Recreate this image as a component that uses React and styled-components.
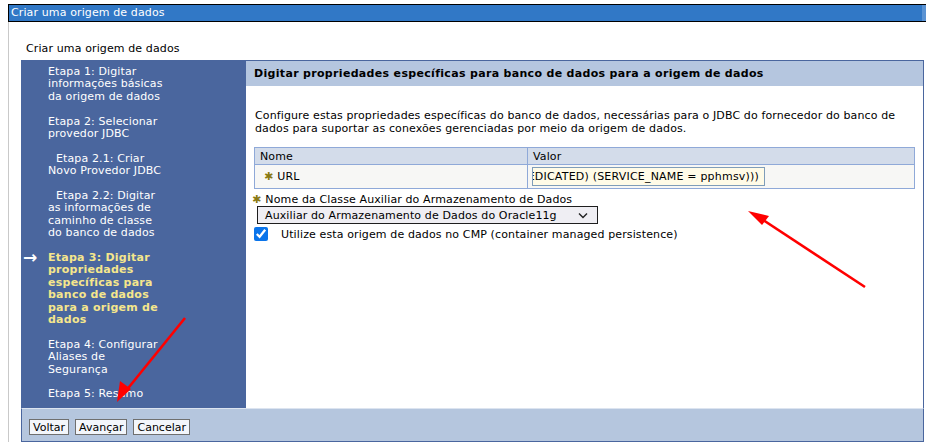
import React from 'react'
import styled, { createGlobalStyle } from 'styled-components'

const GlobalStyle = createGlobalStyle`
  html, body {
    margin: 0;
    padding: 0;
    background: #ffffff;
  }
  body {
    font-family: "DejaVu Sans", Verdana, sans-serif;
    font-size: 11px;
    letter-spacing: 0.12px;
    color: #000000;
  }
`

const Page = styled.div`
  position: relative;
  width: 926px;
  height: 442px;
  overflow: hidden;
  padding-top: 4px;
  box-sizing: border-box;
`

const Frame = styled.div`
  margin-left: 8px;
  border-left: 1px solid #c9c9c9;
  height: 438px;
  box-sizing: border-box;
`

const TitleBar = styled.div`
  height: 16px;
  line-height: 16px;
  margin-left: -1px;
  border-top: 1px solid #000;
  border-bottom: 1px solid #000;
  border-left: 1px solid #000;
  background: linear-gradient(to right, #3178c6 0, #3178c6 913px, #5b93d3 913px);
  color: #fff;
  padding-left: 2px;
  white-space: nowrap;
`

const Body = styled.div`
  padding: 20px 0 0 12px;
`

const Subtitle = styled.div`
  padding-left: 5px;
  height: 13px;
  line-height: 13px;
  margin-bottom: 5px;
`

const Wizard = styled.div`
  display: grid;
  grid-template-columns: 225px 678px;
  grid-template-rows: 348px 34px;
`

const Nav = styled.div`
  background: #4a669e;
  padding: 6px 0 0 0;
`

const NavItem = styled.div`
  position: relative;
  padding-left: 27px;
  line-height: 12.4px;
  margin-bottom: 12.4px;
  color: ${p => (p.current ? '#f5e68c' : '#ffffff')};
  font-weight: ${p => (p.current ? 'bold' : 'normal')};
  letter-spacing: ${p => (p.current ? '0.25px' : '0.12px')};
  white-space: nowrap;
`

const Line = styled.span`
  display: block;
  padding-left: ${p => (p.indent ? '8px' : '0')};
`

const CurrentArrow = styled.span`
  position: absolute;
  left: 2px;
  top: -1px;
  color: #ffffff;
  font-weight: bold;
  font-size: 17px;
  line-height: 12px;
`

const Panel = styled.div`
  border-top: 1px solid #4a669e;
  border-right: 1px solid #4a669e;
  background: #ffffff;
`

const PanelHeader = styled.div`
  height: 25px;
  line-height: 26px;
  background: #b5c6df;
  font-weight: bold;
  letter-spacing: 0.32px;
  padding-left: 8px;
  white-space: nowrap;
`

const PanelBody = styled.div`
  padding: 24px 8px 0 8px;
`

const Description = styled.p`
  margin: 0 0 12px 1px;
  line-height: 12.6px;
  white-space: nowrap;
`

const PropTable = styled.table`
  width: 661px;
  border-collapse: collapse;
  border: 1px solid #8fa9d8;
`

const HeadCell = styled.th`
  background: #d3dcea;
  font-weight: normal;
  text-align: left;
  height: 16px;
  padding: 0 0 0 5px;
  border-right: 1px solid #8fa9d8;
  border-bottom: 1px solid #8fa9d8;
  width: ${p => p.w || 'auto'};
`

const Cell = styled.td`
  background: #f7f7f5;
  height: 23px;
  padding: 0 0 0 ${p => p.pad || '4px'};
  border-right: 1px solid #8fa9d8;
  vertical-align: middle;
`

const Required = styled.span`
  color: #8a7a12;
  margin-right: 4px;
`

const ValueInput = styled.div`
  width: 233px;
  height: 19px;
  box-sizing: border-box;
  border: 1px solid #7f9db9;
  background: #fffbe7;
  display: flex;
  justify-content: flex-end;
  align-items: center;
  overflow: hidden;
  padding-right: 5px;
  letter-spacing: 0.2px;
  white-space: nowrap;
`

const FieldLabel = styled.div`
  margin: 4px 0 0 -2px;
  line-height: 13px;
`

const FakeSelect = styled.div`
  margin: 0 0 0 3px;
  width: 341px;
  height: 18px;
  box-sizing: border-box;
  border: 1px solid #1e1e1e;
  background: #efeef3;
  display: flex;
  align-items: center;
  justify-content: space-between;
  padding: 0 9px 0 7px;
`

const CheckRow = styled.label`
  display: flex;
  align-items: center;
  margin-top: 3px;
`

const Check = styled.input`
  width: 14px;
  height: 14px;
  margin: 0 13px 0 0;
  accent-color: #0a74ea;
`

const Footer = styled.div`
  grid-column: 1 / 3;
  background: #b5c6de;
  border-top: 1px solid #dce4f0;
  border-left: 1px solid #4a669e;
  border-right: 1px solid #4a669e;
  border-bottom: 1px solid #4a669e;
  display: flex;
  align-items: flex-end;
  gap: 6px;
  padding: 0 0 6px 7px;
`

const Button = styled.button`
  font-family: "DejaVu Sans", Verdana, sans-serif;
  font-size: 11px;
  letter-spacing: 0;
  height: 16px;
  line-height: 13px;
  padding: 0 3px;
  background: #f3f6fb;
  border: 1px solid #6f6f6f;
  color: #000;
  border-radius: 0;
`

const Annotations = styled.svg`
  position: absolute;
  left: 0;
  top: 0;
  pointer-events: none;
`

const ChevronDown = () => (
  <svg width="10" height="7" viewBox="0 0 10 7">
    <path d="M1 1.5 L5 5.5 L9 1.5" fill="none" stroke="#222" strokeWidth="1.4" />
  </svg>
)

const steps = [
  { lines: ['Etapa 1: Digitar', 'informações básicas', 'da origem de dados'] },
  { lines: ['Etapa 2: Selecionar', 'provedor JDBC'] },
  { lines: ['Etapa 2.1: Criar', 'Novo Provedor JDBC'], indent: true },
  { lines: ['Etapa 2.2: Digitar', 'as informações de', 'caminho de classe', 'do banco de dados'], indent: true },
  {
    lines: ['Etapa 3: Digitar', 'propriedades', 'específicas para', 'banco de dados', 'para a origem de', 'dados'],
    current: true,
  },
  { lines: ['Etapa 4: Configurar', 'Aliases de', 'Segurança'] },
  { lines: ['Etapa 5: Resumo'] },
]

const App = () => (
  <>
    <GlobalStyle />
    <Page>
      <Frame>
        <TitleBar>Criar uma origem de dados</TitleBar>
        <Body>
          <Subtitle>Criar uma origem de dados</Subtitle>
          <Wizard>
            <Nav>
              {steps.map((s, i) => (
                <NavItem key={i} current={s.current}>
                  {s.current && <CurrentArrow>→</CurrentArrow>}
                  {s.lines.map((l, j) => (
                    <Line key={j} indent={s.indent && j === 0}>{l}</Line>
                  ))}
                </NavItem>
              ))}
            </Nav>
            <Panel>
              <PanelHeader>Digitar propriedades específicas para banco de dados para a origem de dados</PanelHeader>
              <PanelBody>
                <Description>
                  Configure estas propriedades específicas do banco de dados, necessárias para o JDBC do fornecedor do banco de
                  <br />
                  dados para suportar as conexões gerenciadas por meio da origem de dados.
                </Description>
                <PropTable>
                  <thead>
                    <tr>
                      <HeadCell w="267px">Nome</HeadCell>
                      <HeadCell>Valor</HeadCell>
                    </tr>
                  </thead>
                  <tbody>
                    <tr>
                      <Cell pad="9px">
                        <Required>✱</Required>URL
                      </Cell>
                      <Cell>
                        <ValueInput>(SERVER = DEDICATED) (SERVICE_NAME = pphmsv)))</ValueInput>
                      </Cell>
                    </tr>
                  </tbody>
                </PropTable>
                <FieldLabel>
                  <Required>✱</Required>Nome da Classe Auxiliar do Armazenamento de Dados
                </FieldLabel>
                <FakeSelect>
                  <span>Auxiliar do Armazenamento de Dados do Oracle11g</span>
                  <ChevronDown />
                </FakeSelect>
                <CheckRow>
                  <Check type="checkbox" defaultChecked />
                  Utilize esta origem de dados no CMP (container managed persistence)
                </CheckRow>
              </PanelBody>
            </Panel>
            <Footer>
              <Button>Voltar</Button>
              <Button>Avançar</Button>
              <Button>Cancelar</Button>
            </Footer>
          </Wizard>
        </Body>
      </Frame>
      <Annotations width="926" height="442" viewBox="0 0 926 442">
        <line x1="865" y1="287" x2="760" y2="218" stroke="#f00" strokeWidth="2.6" />
        <polygon points="748,211 769,216 762,225" fill="#f00" />
        <line x1="185" y1="318" x2="125" y2="392" stroke="#f00" strokeWidth="2.6" />
        <polygon points="117,402 120,381 131,389" fill="#f00" />
      </Annotations>
    </Page>
  </>
)

export default App
